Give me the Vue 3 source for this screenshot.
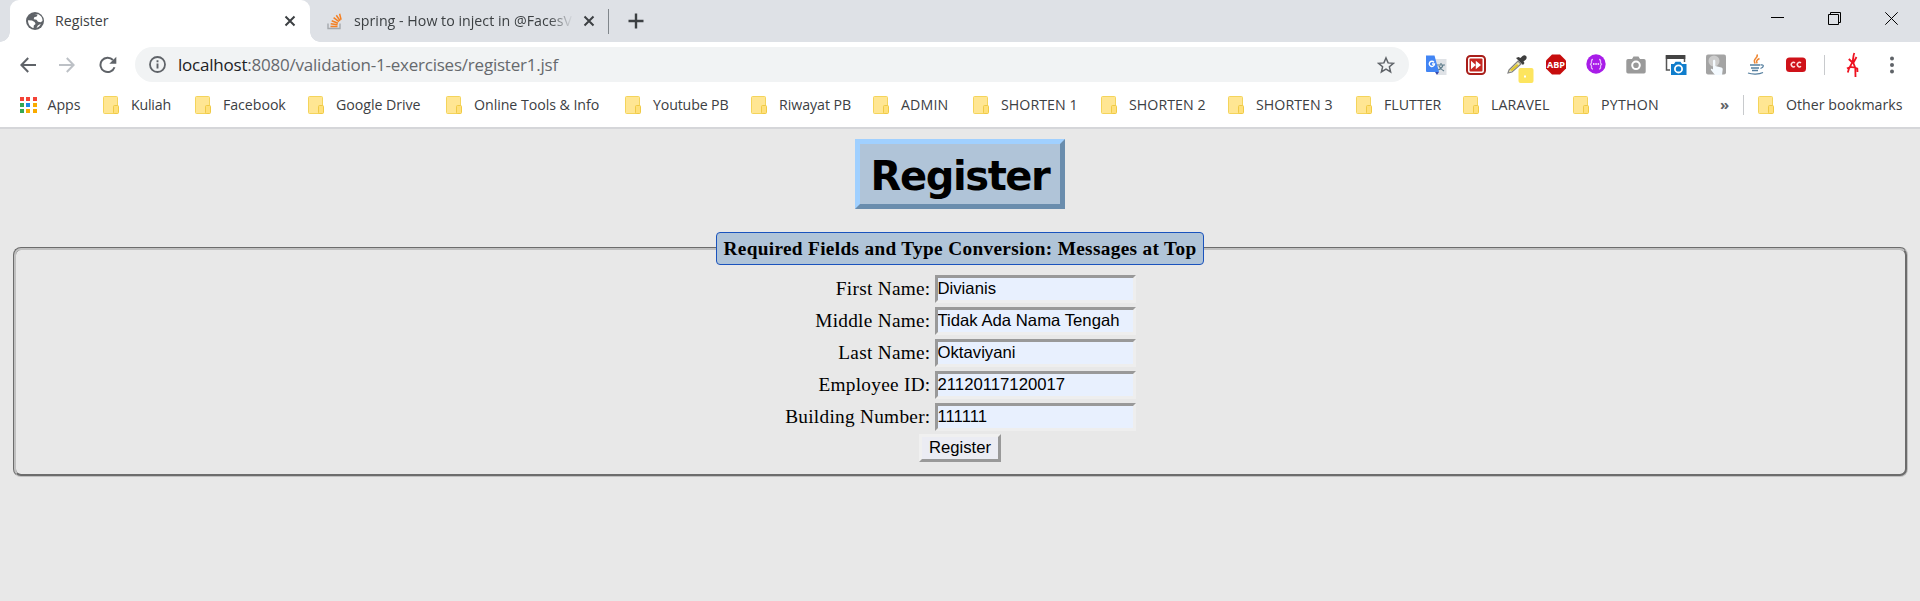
<script setup>
import { ref } from 'vue'

const bookmarks = [
  { name: 'Kuliah', width: 92, spacing: -0.2 },
  { name: 'Facebook', width: 113, spacing: -0.05 },
  { name: 'Google Drive', width: 138, spacing: -0.05 },
  { name: 'Online Tools & Info', width: 179, spacing: -0.05 },
  { name: 'Youtube PB', width: 126, spacing: -0.15 },
  { name: 'Riwayat PB', width: 122, spacing: -0.05 },
  { name: 'ADMIN', width: 100, spacing: 0.15 },
  { name: 'SHORTEN 1', width: 128, spacing: 0.05 },
  { name: 'SHORTEN 2', width: 127, spacing: 0.05 },
  { name: 'SHORTEN 3', width: 128, spacing: 0.05 },
  { name: 'FLUTTER', width: 107, spacing: 0 },
  { name: 'LARAVEL', width: 110, spacing: 0.1 },
  { name: 'PYTHON', width: 100, spacing: 0.25 },
]
const appColors = ['#f44336', '#f44336', '#f44336', '#34a853', '#1e88e5', '#f9ab00', '#34a853', '#f9ab00', '#f9ab00']
const fields = ref([
  { id: 'first', label: 'First Name:', value: 'Divianis' },
  { id: 'middle', label: 'Middle Name:', value: 'Tidak Ada Nama Tengah' },
  { id: 'last', label: 'Last Name:', value: 'Oktaviyani' },
  { id: 'employee', label: 'Employee ID:', value: '21120117120017' },
  { id: 'building', label: 'Building Number:', value: '111111' },
])
</script>

<template>
  <div class="window">
    <header class="tabs">
      <div class="tab active">
        <svg class="favicon" width="18" height="18" viewBox="0 0 18 18">
          <circle cx="9" cy="9" r="9" fill="#5f6368" />
          <path d="M2 8.300l4 .2 2.600 1.600 1 2-1.800 1.300-.2 2.600C4.200 15.500 2 12.300 2 8.300z" fill="#fff" />
          <path d="M8.500 2l3.200.6-1 1.800-2.500.8-.5 2 2.800.6 1.500 2 2.600.5 1.900-1.400c.4-3.200-2-6.300-5.300-7z" fill="#fff" />
          <path d="M10.500 15.900l1.300-2.500 3-1.600c-.8 2.100-2.400 3.600-4.300 4.100z" fill="#fff" />
        </svg>
        <span class="tab-title">Register</span>
        <svg class="cross" width="12" height="12" viewBox="0 0 12 12"><path d="M1.500 1.500l9 9M10.500 1.500l-9 9" stroke="#3c4043" stroke-width="2" /></svg>
      </div>
      <div class="tab second">
        <svg class="so" width="16" height="17" viewBox="0 0 16 17">
          <path d="M1 10.500v5h12v-5" fill="none" stroke="#a5a9ad" stroke-width="1.400" />
          <path d="M3.500 13.400h7M3.700 10.800l6.900.9M4.700 7.700l6.300 2.500M6.600 4.700l5.400 4M9.300 2.300l3.800 5.500M12.600.8l1.500 6" fill="none" stroke="#f48024" stroke-width="1.500" />
        </svg>
        <span class="tab-title faded">spring - How to inject in @FacesV</span>
        <svg class="cross" width="12" height="12" viewBox="0 0 12 12"><path d="M1.500 1.500l9 9M10.500 1.500l-9 9" stroke="#3c4043" stroke-width="2" /></svg>
      </div>
      <i class="tab-divider"></i>
      <svg class="plus" width="16" height="16" viewBox="0 0 16 16"><path d="M8 .5v15M.5 8h15" stroke="#3c4043" stroke-width="2.400" /></svg>
      <div class="controls">
        <svg width="13" height="13" viewBox="0 0 13 13"><path d="M0 5.500h13" stroke="#000" /></svg>
        <svg width="13" height="13" viewBox="0 0 13 13"><path d="M.5 2.500h10v10H.500zM2.500 2.500v-2h10v10h-2" fill="none" stroke="#000" /></svg>
        <svg width="13" height="13" viewBox="0 0 13 13"><path d="M.3.300l12.400 12.400M12.700.300L.3 12.700" stroke="#000" /></svg>
      </div>
    </header>

    <nav class="toolbar">
      <svg class="nav-icon back" width="16" height="16" viewBox="0 0 16 16"><path d="M16 8H1.500M8.200 1L1.400 8l6.800 7" fill="none" stroke="#5f6368" stroke-width="2" /></svg>
      <svg class="nav-icon forward" width="16" height="16" viewBox="0 0 16 16"><path d="M0 8h14.500M7.800 1l6.800 7-6.800 7" fill="none" stroke="#bdc1c6" stroke-width="2" /></svg>
      <svg class="nav-icon reload" width="18" height="18" viewBox="0 0 18 18"><path d="M15.500 11.200A7.200 7.200 0 1 1 14 4" fill="none" stroke="#5f6368" stroke-width="2" /><path d="M17.300.8v7h-7z" fill="#5f6368" /></svg>
      <div class="omnibox">
        <svg width="17" height="17" viewBox="0 0 17 17"><circle cx="8.500" cy="8.500" r="7.500" fill="none" stroke="#5f6368" stroke-width="1.800" /><path d="M8.500 7.500v5M8.500 4.300v1.900" stroke="#5f6368" stroke-width="1.900" /></svg>
        <span class="url"><b>localhost</b>:8080/validation-1-exercises/register1.jsf</span>
        <svg class="star" width="18" height="18" viewBox="0 0 18 18"><path d="M9 2l2.100 4.900 5.300.4-4 3.500 1.200 5.200L9 13.200 4.400 16l1.200-5.200-4-3.500 5.300-.4z" fill="none" stroke="#5f6368" stroke-width="1.500" /></svg>
      </div>
      <div class="extensions">
        <svg viewBox="0 0 22 30">
          <path d="M9 9h12.500v16H13z" fill="#dfe2e6" /><path d="M12 15h8M16 13v2M13 20c3-1 4.500-3 5-5M14 16c1 2 3 4 5 5" stroke="#607d8b" stroke-width="1.200" fill="none" />
          <path d="M1 5.500h8.500L14 22H2a1 1 0 0 1-1-1z" fill="#4285f4" /><path d="M10 22h4l-2 3z" fill="#3949ab" /><path d="M9 12.300A2.600 2.600 0 1 0 9.500 14H7" stroke="#fff" stroke-width="1.400" fill="none" />
        </svg>
        <svg viewBox="0 0 22 30">
          <rect x="2" y="6" width="18" height="18" rx="3.500" fill="#fff" stroke="#a91e1a" stroke-width="2" /><rect x="4.500" y="8.500" width="13" height="13" rx="1" fill="#c62822" /><path d="M6 10.800l4.800 4.200-4.800 4.200zM10.800 10.800l5.200 4.200-5.200 4.200z" fill="#fff" />
        </svg>
        <svg viewBox="0 0 28 30">
          <path d="M4 20l9-9 3 3-9 8-4 1z" fill="#ece5b0" stroke="#828282" stroke-width="1.200" /><path d="M5 20l7-6 1.500 1.500L7 21z" fill="#e1c72b" /><path d="M11 8l7 7 1.500-2-1-1.500 2.500-2c2-3-1-5.500-3.500-3.500l-2 2L13.500 7z" fill="#3e3e3e" />
          <rect x="13.500" y="18" width="15" height="15" rx="2" fill="#fde55f" /><rect x="19" y="25.500" width="2" height="2" fill="#fff" />
        </svg>
        <svg viewBox="0 0 22 30">
          <path d="M7 4.500h8l6 6v8l-6 6H7l-6-6v-8z" fill="#c70d0d" /><text x="11" y="18.400" textLength="18" lengthAdjust="spacingAndGlyphs" text-anchor="middle" class="abp">ABP</text>
        </svg>
        <svg viewBox="0 0 22 30">
          <circle cx="11" cy="14" r="9.700" fill="#a81ce8" /><path d="M8 9.500c-2 0-1.500 1.500-1.500 3S5 14.300 5 14.300s1.500.2 1.500 1.700-.5 3 1.500 3M14 9.500c2 0 1.500 1.500 1.500 3s1.500 1.800 1.500 1.800-1.500.2-1.500 1.700.5 3-1.500 3" fill="none" stroke="#e4b8fa" stroke-width="1.300" /><path d="M8 14h1.500M10.300 14h1.500M12.600 14h1.500" stroke="#fff" stroke-width="1.500" />
        </svg>
        <svg viewBox="0 0 22 30">
          <path d="M3 9h4l1.500-2.500h5L15 9h4a1.700 1.700 0 0 1 1.700 1.700v11A1.700 1.700 0 0 1 19 23.400H3a1.700 1.700 0 0 1-1.700-1.700v-11A1.700 1.700 0 0 1 3 9z" fill="#9a9a9a" /><circle cx="11" cy="15.300" r="3.800" fill="#9a9a9a" stroke="#fff" stroke-width="2" />
        </svg>
        <svg viewBox="0 0 22 30">
          <path d="M1.500 6h18v14h-18z" fill="#fff" stroke="#555" stroke-width="1.500" /><path d="M.800 5h19.500v4H.800z" fill="#444" /><path d="M5 12h18v14H5z" fill="#fff" /><path d="M6 14h3l1.500-2.200h5L17 14h4.500v11H6z" fill="#0f7dcc" /><circle cx="13.500" cy="18.900" r="3.600" fill="#0f7dcc" stroke="#fff" stroke-width="1.800" />
        </svg>
        <svg viewBox="0 0 22 30">
          <rect x="1" y="4.500" width="20" height="20" rx="2" fill="#a4a4a4" /><circle cx="9" cy="11" r="5.500" fill="#ccc" /><path d="M8 11c0-1.600 2.300-1.600 2.300 0v5l6 1.500c1 .4 1.500 1 1.400 2L17 25h-7l-4-5c-.5-1.200.6-1.600 2-.5z" fill="#f4faff" />
        </svg>
        <svg viewBox="0 0 22 30">
          <path d="M11.800 4.500c2.800 3-5.500 4.500-1.500 9M14.500 8.500c-3 1.500-3.500 2.800-2.300 4.800" stroke="#ef8733" stroke-width="1.500" fill="none" /><path d="M5 15h10M6 18h8M7 20.500h6M3 23c4 1.500 11 1.500 15-.5M15.500 15c4-1 3.500 2.500 0 3.500" stroke="#557f9f" stroke-width="1.300" fill="none" />
        </svg>
        <svg viewBox="0 0 22 30">
          <rect x="1" y="7.500" width="20" height="14.500" rx="3.500" fill="#cf1219" /><path d="M10 13a2.200 2.200 0 1 0 0 3.200M16 13a2.200 2.200 0 1 0 0 3.200" fill="none" stroke="#ffdede" stroke-width="1.500" />
        </svg>
      </div>
      <i class="bar-divider"></i>
      <svg class="avatar" width="16" height="28" viewBox="0 0 16 28"><path d="M9.300 2C8 5 8.500 8 7.300 11.500L4 17.500 2.800 21.500M3.800 8l3.700 3.500M11.500 6L8.500 11.500M8 11l2.300 6 .2 9M2 17.500C5 15.300 8 15.500 12.300 17.500l.2 3.500" fill="none" stroke="#ee1220" stroke-width="1.800" /></svg>
      <svg class="menu" width="6" height="20" viewBox="0 0 6 20"><circle v-for="n in 3" :key="n" cx="3" :cy="n * 6.500 - 3" r="2" fill="#5f6368" /></svg>
    </nav>

    <div class="bookmarks">
      <div class="apps">
        <span class="app-grid"><i v-for="(c, i) in appColors" :key="i" :style="{ background: c }"></i></span>
        <span class="apps-name">Apps</span>
      </div>
      <div v-for="b in bookmarks" :key="b.name" class="bookmark" :style="{ width: b.width + 'px', letterSpacing: b.spacing + 'px' }">
        <span class="folder"></span><span class="name">{{ b.name }}</span>
      </div>
      <span class="more">»</span>
      <i class="mark-divider"></i>
      <div class="bookmark other"><span class="folder"></span><span class="name">Other bookmarks</span></div>
    </div>

    <main>
      <h1>Register</h1>
      <fieldset>
        <legend>Required Fields and Type Conversion: Messages at Top</legend>
        <form @submit.prevent>
          <div class="fields">
            <template v-for="f in fields" :key="f.id">
              <label :for="f.id">{{ f.label }}</label>
              <input :id="f.id" v-model="f.value" type="text" spellcheck="false" />
            </template>
          </div>
          <button type="submit">Register</button>
        </form>
      </fieldset>
    </main>
  </div>
</template>

<style>
body { margin: 0; background: #e8e8e8; overflow: hidden; }
</style>

<style scoped>
* { box-sizing: border-box; }
svg { display: block; flex: none; }
.window { width: 1920px; height: 601px; font-family: "Open Sans", "Noto Sans", sans-serif; font-size: 14.200px; color: #3c4043; background: #e8e8e8; }
.tabs { height: 42px; display: flex; background: #dee1e6; padding-left: 10px; }
.tab { height: 42px; display: flex; align-items: center; }
.active { position: relative; width: 300px; background: #fff; border-radius: 9px 9px 0 0; padding: 0 14px 0 16px; }
.active::before, .active::after { content: ""; position: absolute; bottom: 0; width: 10px; height: 10px; }
.active::before { left: -10px; background: radial-gradient(circle at 0 0, transparent 9.500px, #fff 10px); }
.active::after { right: -10px; background: radial-gradient(circle at 100% 0, transparent 9.500px, #fff 10px); }
.tab-title { margin-left: 11px; flex: 1; padding-bottom: 2px; white-space: nowrap; overflow: hidden; }
.second { width: 298px; padding: 0 14px 0 17px; }
.second .tab-title { flex: none; width: 220px; }
.second .cross { margin-left: 9px; }
.so { width: 16px; }
.faded { letter-spacing: .02px; mask-image: linear-gradient(90deg, #000 195px, transparent 219px); }
.tab-divider { width: 1px; height: 25px; margin-top: 9px; background: #80868b; }
.plus { margin: 13px 0 0 19px; }
.controls { display: flex; gap: 44px; margin: 12px 22px 0 auto; }
.toolbar { height: 46px; display: flex; align-items: center; padding: 0 0 1px 20px; background: #fff; }
.forward { margin-left: 23px; }
.reload { margin-left: 24px; }
.omnibox { width: 1274px; height: 35px; margin-left: 18px; border-radius: 18px; background: #f1f3f4; display: flex; align-items: center; padding: 0 14px; }
.url { margin-left: 12px; padding-bottom: 1px; font-size: 17px; letter-spacing: -.22px; color: #66696d; white-space: nowrap; }
.url b { color: #202124; font-weight: 400; }
.star { margin-left: auto; }
.extensions { display: flex; margin-left: 16px; gap: 18px; }
.extensions svg { width: 22px; height: 30px; overflow: visible; }
.extensions svg:nth-child(3) { width: 28px; margin-right: -6px; }
.abp { font: 700 9px "Open Sans", sans-serif; fill: #fff; }
.bar-divider { width: 1px; height: 20px; background: #c8cacd; margin-left: 17px; }
.avatar { margin-left: 20px; }
.menu { margin-left: 28px; }
.bookmarks { height: 39px; display: flex; align-items: center; background: #fff; padding: 0 18px 5px 20px; white-space: nowrap; }
.apps { width: 83px; flex: none; display: flex; align-items: center; }
.app-grid { display: grid; grid-template-columns: repeat(3, 4px); grid-auto-rows: 4px; gap: 2.300px; }
.apps-name { margin-left: 11px; padding-bottom: 2px; letter-spacing: -.1px; }
.bookmark { display: flex; align-items: center; flex: none; }
.name { padding-bottom: 2px; }
.folder { position: relative; width: 15px; height: 18px; margin-right: 13px; flex: none; border: 1px solid #f4d45b; border-radius: 1.500px; background: #ffe693; }
.folder::after { content: ""; position: absolute; right: -2px; bottom: -1px; width: 4px; height: 7px; border: 1px solid #f0ca45; border-radius: 1.500px; background: #ffe07a; }
.more { margin-left: 47px; width: 8px; flex: none; padding-bottom: 2px; font-size: 15px; font-weight: 700; color: #5f6368; line-height: 15px; }
.mark-divider { width: 1px; height: 20px; margin: 0 14px 0 15px; flex: none; background: #c8cacd; }
.other { letter-spacing: 0; }
main { height: 474px; border-top: 2px solid #d5d6d9; padding: 10px 13px 0; display: flex; flex-direction: column; align-items: center; color: #000; font-family: "Liberation Serif", "Times New Roman", serif; font-size: 19.300px; }
h1 { margin: 0; width: 210px; height: 70px; padding-top: 2px; border: 5px solid; border-color: #a0d0ff #6a8dad #6a8dad #a0d0ff; background: #b0c4d8; font: 700 40px/60px "DejaVu Sans", sans-serif; letter-spacing: -1.400px; text-align: center; white-space: nowrap; }
fieldset { width: 1895px; height: 245px; margin: 23px 0 0; padding: 0; border: 3px groove #c0c0c0; border-radius: 8px; }
legend { margin: 0 auto; width: 488px; height: 33px; padding: 0; border: 1px solid #1a53bd; border-radius: 4px; background: #b0c4d8; font-weight: 700; line-height: 31px; letter-spacing: .33px; text-align: center; white-space: nowrap; }
form { display: flex; flex-direction: column; align-items: center; padding-top: 10px; }
.fields { display: grid; grid-template-columns: 146px 201px; column-gap: 4px; row-gap: 4px; }
label { display: flex; justify-content: flex-end; line-height: 27px; letter-spacing: .28px; white-space: nowrap; }
input { width: 201px; height: 28px; padding: 0 0 1px; border: 3px solid; border-color: #999 #eee #eee #999; border-radius: 0; background: #e8f0fe; color: #000; font: 16.720px "Liberation Sans", Arial, sans-serif; outline: none; }
button { margin-top: 3px; width: 82px; height: 28px; padding: 0; border: 3px solid; border-color: #f0f0f0 #999 #999 #f0f0f0; background: #ebecf3; color: #000; font: 16.670px "Liberation Sans", Arial, sans-serif; }
</style>
